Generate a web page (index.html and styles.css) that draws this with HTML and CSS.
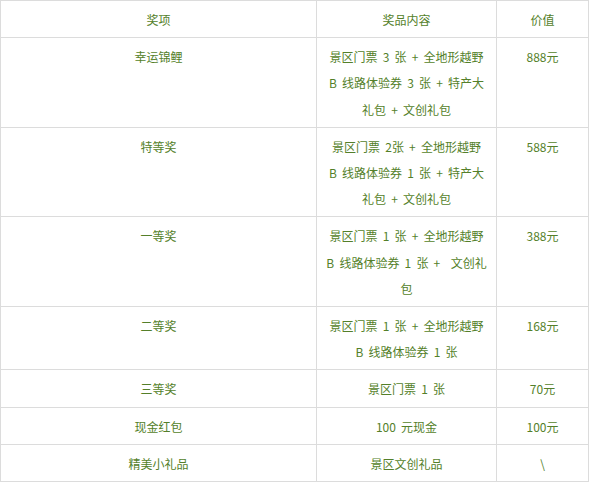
FILE: index.html
```html
<!DOCTYPE html>
<html lang="zh">
<head>
<meta charset="utf-8">
<link rel="stylesheet" href="styles.css">
</head>
<body>
<table class="prize-table">
  <colgroup>
    <col class="c1">
    <col class="c2">
    <col class="c3">
  </colgroup>
  <thead>
    <tr><th>奖项</th><th>奖品内容</th><th>价值</th></tr>
  </thead>
  <tbody>
    <tr><td>幸运锦鲤</td><td class="content">景区门票 3 张 + 全地形越野<br>B 线路体验券 3 张 + 特产大<br>礼包 + 文创礼包</td><td>888元</td></tr>
    <tr><td>特等奖</td><td class="content">景区门票 2张 + 全地形越野<br>B 线路体验券 1 张 + 特产大<br>礼包 + 文创礼包</td><td>588元</td></tr>
    <tr><td>一等奖</td><td class="content">景区门票 1 张 + 全地形越野<br>B 线路体验券 1 张 + &nbsp;文创礼<br>包</td><td>388元</td></tr>
    <tr><td>二等奖</td><td class="content">景区门票 1 张 + 全地形越野<br>B 线路体验券 1 张</td><td>168元</td></tr>
    <tr><td>三等奖</td><td class="content">景区门票 1 张</td><td>70元</td></tr>
    <tr><td>现金红包</td><td class="content">100 元现金</td><td>100元</td></tr>
    <tr><td>精美小礼品</td><td class="content">景区文创礼品</td><td>\</td></tr>
  </tbody>
</table>
</body>
</html>
```
FILE: styles.css
```css
html, body {
  margin: 0;
  padding: 0;
  background: #ffffff;
}
.prize-table {
  border-collapse: collapse;
  width: 588px;
  table-layout: fixed;
  font-family: "Noto Sans CJK SC", "Noto Sans", sans-serif;
  font-size: 12px;
  color: #547f2a;
}
.c1 { width: 316px; }
.c2 { width: 180px; }
.c3 { width: 92px; }
.prize-table th,
.prize-table td {
  border: 1px solid #dcdcdc;
  padding: 6px 6px 4px;
  line-height: 26.2px;
  text-align: center;
  vertical-align: top;
  font-weight: normal;
}
.prize-table .content {
  word-spacing: 2.5px;
  white-space: nowrap;
}
```
